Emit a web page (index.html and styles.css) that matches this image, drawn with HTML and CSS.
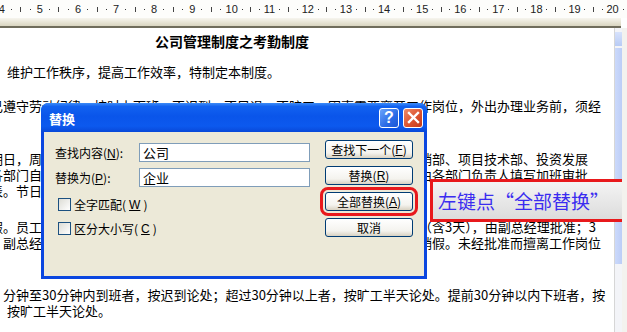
FILE: index.html
```
<!DOCTYPE html>
<html>
    <head>
        <title>替换</title>
        <link rel="stylesheet" href="styles.css">
    </head>
    <body>
        <div class="screen">
            <div class="ruler">
                <div class="ruler-scale">
                    <div class="cm"><span>4</span><i class="d"></i><i class="t"></i><i class="d"></i></div>
                    <div class="cm"><span>5</span><i class="d"></i><i class="t"></i><i class="d"></i></div>
                    <div class="cm"><span>6</span><i class="d"></i><i class="t"></i><i class="d"></i></div>
                    <div class="cm"><span>7</span><i class="d"></i><i class="t"></i><i class="d"></i></div>
                    <div class="cm"><span>8</span><i class="d"></i><i class="t"></i><i class="d"></i></div>
                    <div class="cm"><span>9</span><i class="d"></i><i class="t"></i><i class="d"></i></div>
                    <div class="cm"><span>10</span><i class="d"></i><i class="t"></i><i class="d"></i></div>
                    <div class="cm"><span>11</span><i class="d"></i><i class="t"></i><i class="d"></i></div>
                    <div class="cm"><span>12</span><i class="d"></i><i class="t"></i><i class="d"></i></div>
                    <div class="cm"><span>13</span><i class="d"></i><i class="t"></i><i class="d"></i></div>
                    <div class="cm"><span>14</span><i class="d"></i><i class="t"></i><i class="d"></i></div>
                    <div class="cm"><span>15</span><i class="d"></i><i class="t"></i><i class="d"></i></div>
                    <div class="cm"><span>16</span><i class="d"></i><i class="t"></i><i class="d"></i></div>
                    <div class="cm"><span>17</span><i class="d"></i><i class="t"></i><i class="d"></i></div>
                    <div class="cm"><span>18</span><i class="d"></i><i class="t"></i><i class="d"></i></div>
                    <div class="cm"><span>19</span><i class="d"></i><i class="t"></i><i class="d"></i></div>
                    <div class="cm"><span>20</span><i class="d"></i><i class="t"></i><i class="d"></i></div>
                </div>
                <div class="ruler-band"></div>
            </div>

            <div class="workspace">
                <div class="doc">
                    <h1 class="doc-title">公司管理制度之考勤制度</h1>
                    <p class="line l1">维护工作秩序，提高工作效率，特制定本制度。</p>
                    <p class="line cut l2">己遵守劳动纪律，按时上下班，不迟到，不早退，不旷工。因事需要离开工作岗位，外出办理业务前，须经</p>
                    <p class="line cut l3">期日，周末为休息日。各部门因工作需要加班，如行政部、财务部、市场营销部、项目技术部、投资发展</p>
                    <p class="line cut">各部门自行安排员工于节假日加班的，须提前一天书面报请总经理批准后，由各部门负责人填写加班审批</p>
                    <p class="line cut">表。节日加班按国家规定支付加班工资。</p>
                    <p class="line cut l6">假。员工因事请假须事先填写请假申请单，一天由部门经理批准；三天以内（含3天），由副总经理批准；3</p>
                    <p class="line">副总经理审核后报总经理批准。请假期满后应及时返岗并到人事部门办理销假。未经批准而擅离工作岗位</p>
                    <p class="line l8">分钟至30分钟内到班者，按迟到论处；超过30分钟以上者，按旷工半天论处。提前30分钟以内下班者，按</p>
                    <p class="line l9">按旷工半天论处。</p>
                </div>
                <div class="vscroll">
                    <div class="vscroll-btn"></div>
                    <div class="vscroll-thumb"></div>
                </div>
                <div class="edge"></div>
            </div>

            <div class="dialog">
                <div class="titlebar">
                    <span class="title">替换</span>
                    <div class="tb-buttons">
                        <div class="tb-btn tb-help">?</div>
                        <div class="tb-btn tb-close">
                            <svg width="13" height="13" viewBox="0 0 13 13">
                                <path d="M2 2 L11 11 M11 2 L2 11" stroke="#fff" stroke-width="2.4" stroke-linecap="square" />
                            </svg>
                        </div>
                    </div>
                </div>
                <div class="dlg-body">
                    <div class="dlg-left">
                        <div class="field">
                            <label>查找内容(<u>N</u>):</label>
                            <div class="input">公司</div>
                        </div>
                        <div class="field">
                            <label>替换为(<u>P</u>):</label>
                            <div class="input">企业</div>
                        </div>
                        <div class="opts">
                            <div class="opt"><span class="box"></span>全字匹配(<u>W</u>)</div>
                            <div class="opt"><span class="box"></span>区分大小写(<u>C</u>)</div>
                        </div>
                    </div>
                    <div class="dlg-right">
                        <div class="btn">查找下一个(<u>F</u>)</div>
                        <div class="btn">替换(<u>R</u>)</div>
                        <div class="btn marked">全部替换(<u>A</u>)</div>
                        <div class="btn">取消</div>
                    </div>
                </div>
            </div>

            <div class="callout">左键点“全部替换”</div>
        </div>
    </body>
</html>
```

FILE: styles.css
```
body {
    margin: 0;
    padding: 0;
    overflow: hidden;
    font-family: "Noto Sans CJK SC", "Liberation Sans", sans-serif;
    color: #000;
    background-color: #fff;
}

.screen {
    position: relative;
    width: 627px;
    height: 332px;
    overflow: hidden;
}

/* ruler */

.ruler {
    height: 28px;
}

.ruler-scale {
    height: 18px;
    display: flex;
    margin-left: -3px;
    background-color: #fdfdfb;
    overflow: hidden;
}

.cm {
    flex: none;
    width: 38.1px;
    display: flex;
    align-items: center;
}

.cm span,
.cm i {
    flex: 1;
    display: flex;
    justify-content: center;
    font-family: "Liberation Sans", sans-serif;
    font-size: 11px;
    color: #222;
    line-height: 18px;
}

.cm i.d::before {
    content: "";
    width: 1px;
    height: 1px;
    background-color: #333;
}

.cm i.t::before {
    content: "";
    width: 1px;
    height: 5px;
    background-color: #444;
}

.ruler-band {
    height: 8px;
    width: 621px;
    background: linear-gradient(#f6f5ef, #e8e5d6 50%, #d9d5c0);
    border-bottom: 2px solid #6f6c5b;
}

/* document */

.workspace {
    display: flex;
    height: 304px;
}

.doc {
    width: 614px;
    flex: none;
    overflow: hidden;
    padding-left: 3px;
    box-sizing: border-box;
}

.doc-title {
    margin: 5px 0 0 152px;
    font-size: 14px;
    font-weight: bold;
    line-height: 16px;
    white-space: nowrap;
}

.line {
    margin: 0;
    font-size: 13px;
    line-height: 16px;
    white-space: nowrap;
}

.cut {
    margin-left: -13px;
}

.l1 {
    margin-top: 15px;
    margin-left: 4px;
}

.l2 {
    margin-top: 18px;
}

.l3 {
    margin-top: 37px;
}

.l6 {
    margin-top: 20px;
}

.l8 {
    margin-top: 36px;
}

.l9 {
    margin-left: 4px;
}

.vscroll {
    flex: none;
    width: 7px;
    border-left: 1px solid #d6d6d6;
    background-color: #f3f4f8;
}

.vscroll-btn {
    height: 14px;
    margin-top: 4px;
    background: linear-gradient(#d7e2fc, #b8cbf5);
}

.vscroll-thumb {
    height: 216px;
    margin-top: 2px;
    background: linear-gradient(90deg, #cbd9fb, #bccdf6);
}

.edge {
    flex: 1;
    background-color: #f3f2ee;
}

/* dialog */

.dialog {
    position: absolute;
    left: 41px;
    top: 103px;
    width: 386px;
    height: 176px;
    box-sizing: border-box;
    border: 3px solid #0a46e0;
    border-top: 0;
    border-radius: 8px 8px 0 0;
    display: flex;
    flex-direction: column;
    background-color: #0a46e0;
}

.titlebar {
    height: 29px;
    margin: 0 -3px;
    padding: 0 4px 0 8px;
    border-radius: 7px 7px 0 0;
    display: flex;
    align-items: center;
    justify-content: space-between;
    background: linear-gradient(#3d8cf7 0%, #1262f0 12%, #0a55ea 45%, #0c59ee 80%, #0848d8 100%);
}

.title {
    color: #fff;
    font-size: 13px;
    font-weight: bold;
    padding-top: 1px;
}

.tb-buttons {
    display: flex;
    gap: 4px;
}

.tb-btn {
    width: 20px;
    height: 20px;
    box-sizing: border-box;
    border: 1px solid #fff;
    border-radius: 3px;
    display: flex;
    align-items: center;
    justify-content: center;
    color: #fff;
    font-family: "Liberation Sans", sans-serif;
    font-size: 16px;
    font-weight: bold;
}

.tb-help {
    background: linear-gradient(135deg, #6aa4fb, #2a6ae6 60%, #1b56d6);
}

.tb-close {
    background: linear-gradient(135deg, #ee8b68, #dc5330 55%, #c23a1a);
}

.dlg-body {
    flex: 1;
    display: flex;
    justify-content: space-between;
    padding: 8px 11px 0 11px;
    background-color: #ece9d8;
    font-size: 12px;
}

.dlg-left {
    width: 255px;
    padding-top: 3px;
}

.field {
    display: flex;
    align-items: center;
    height: 19px;
    margin-bottom: 6px;
}

.field label {
    width: 84px;
    flex: none;
}

.input {
    width: 171px;
    height: 19px;
    box-sizing: border-box;
    border: 1px solid #7f9db9;
    background-color: #fff;
    padding-left: 3px;
    font-size: 13px;
    line-height: 17px;
}

.opts {
    margin-top: 11px;
    padding-left: 3px;
}

.opt {
    display: flex;
    align-items: center;
    gap: 3px;
    height: 13px;
    margin-bottom: 11px;
}

.box {
    width: 13px;
    height: 13px;
    box-sizing: border-box;
    border: 1px solid #1c5180;
    background: linear-gradient(135deg, #dcdcd5, #fff);
}

.dlg-right {
    width: 88px;
    display: flex;
    flex-direction: column;
    gap: 7px;
}

.btn {
    height: 19px;
    box-sizing: border-box;
    border: 1px solid #003c74;
    border-radius: 3px;
    background: linear-gradient(#fff, #f4f3ee 70%, #d8d2c2);
    display: flex;
    align-items: center;
    justify-content: center;
}

.btn.marked {
    outline: 3px solid #e8191c;
    outline-offset: 2px;
}

u {
    font-family: "Liberation Sans", sans-serif;
}

/* annotation */

.callout {
    position: absolute;
    left: 430px;
    top: 179px;
    width: 192px;
    height: 43px;
    box-sizing: border-box;
    border: 3px solid #e8191c;
    border-right: 0;
    padding-left: 5px;
    background: linear-gradient(#f4f4f4, #dcdcdc);
    color: #3a2cf0;
    font-size: 19px;
    line-height: 37px;
    white-space: nowrap;
}
```
